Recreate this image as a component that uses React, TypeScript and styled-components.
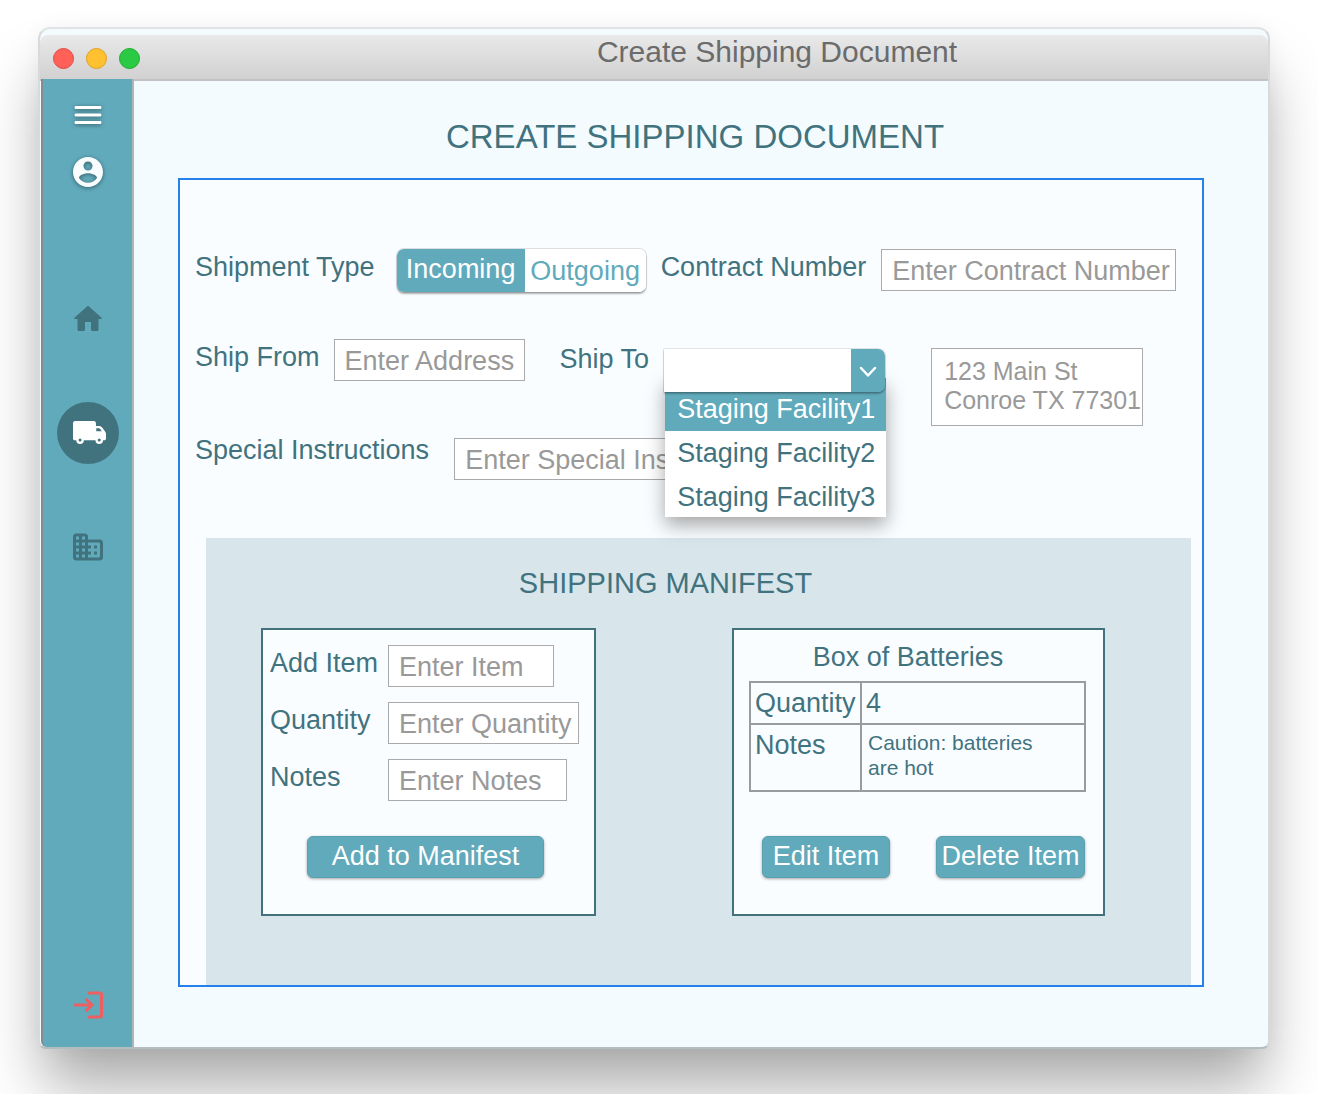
import React, { useState } from "react";
import styled, { createGlobalStyle, css } from "styled-components";

const teal = "#61aabb";
const deepTeal = "#41737f";
const hint = "#999999";
const line = "#aaaaaa";

const GlobalStyle = createGlobalStyle`
  *, *::before, *::after { box-sizing: border-box; }
  body {
    margin: 0;
    background: #ffffff;
    color: ${deepTeal};
    font-family: "Liberation Sans", Helvetica, Arial, sans-serif;
    font-size: 27px;
    line-height: 32px;
  }
  button, input, select, textarea { font: inherit; color: inherit; margin: 0; }
  h1, h2, h3, ul { margin: 0; padding: 0; font-weight: 400; }
`;

const Desktop = styled.div`
  display: flex;
  min-height: 100vh;
  padding: 27px 48px 45px 38px;
  overflow: hidden;
`;

const AppWindow = styled.div`
  flex: 1;
  display: flex;
  flex-direction: column;
  padding-top: 6px;
  border: 2px solid #d6dadb;
  border-top-color: #dfe3e4;
  border-bottom-color: #b4bcbf;
  border-radius: 12px 12px 8px 8px;
  background: #f3fbfe;
  box-shadow: 0 42px 60px -6px rgba(0, 0, 0, 0.34), 0 0 20px rgba(0, 0, 0, 0.04);
`;

const TitleBar = styled.header`
  display: flex;
  align-items: flex-start;
  height: 46px;
  padding-left: 13px;
  border-bottom: 2px solid #c2c2c4;
  border-radius: 8px 8px 0 0;
  background: linear-gradient(#e9e9e9, #d1d1d1);
`;

const Lights = styled.div`
  display: flex;
  gap: 12px;
  padding-top: 13px;
`;

const Light = styled.button<{ $fill: string; $edge: string }>`
  width: 21px;
  height: 21px;
  padding: 0;
  border: 1px solid ${(p) => p.$edge};
  border-radius: 50%;
  background: ${(p) => p.$fill};
`;

const WindowTitle = styled.div`
  flex: 1;
  padding-left: 146px;
  color: #6b6b6b;
  font-size: 30px;
  line-height: 34px;
  text-align: center;
`;

const Body = styled.div`
  flex: 1;
  display: flex;
`;

const Sidebar = styled.nav`
  flex: none;
  display: flex;
  flex-direction: column;
  align-items: center;
  width: 93px;
  margin: -2px 0 0 1px;
  padding: 18px 0 24px;
  border-left: 2px solid #858b8e;
  border-right: 2px solid #b0b5b8;
  border-bottom-left-radius: 6px;
  background: ${teal};
`;

const SideGroup = styled.div<{ $gap: number }>`
  display: flex;
  flex-direction: column;
  align-items: center;
  gap: ${(p) => p.$gap}px;
`;

const Pages = styled(SideGroup)`
  margin: 98px 0 auto;
`;

const IconButton = styled.button<{ $tone: string; $shadow?: boolean }>`
  display: flex;
  padding: 0;
  border: 0;
  background: none;
  color: ${(p) => p.$tone};
  svg { ${(p) => p.$shadow && css`filter: drop-shadow(0 1px 2px rgba(0, 0, 0, 0.45));`} }
`;

const PageButton = styled.button<{ $active?: boolean }>`
  display: flex;
  align-items: center;
  justify-content: center;
  width: 62px;
  height: 62px;
  padding: 0;
  border: 0;
  border-radius: 50%;
  background: ${(p) => (p.$active ? deepTeal : "transparent")};
  color: ${(p) => (p.$active ? "#ffffff" : deepTeal)};
`;

const Main = styled.main`
  flex: 1;
  min-width: 0;
  padding: 36px 64px 59px 44px;
`;

const PageTitle = styled.h1`
  margin-bottom: 21px;
  padding-left: 8px;
  font-size: 33px;
  line-height: 40px;
  text-align: center;
`;

const Panel = styled.form`
  padding-top: 69px;
  border: 2px solid #2680eb;
  background: #fafdff;
`;

const Row = styled.div<{ $space: number }>`
  display: flex;
  align-items: flex-start;
  padding-left: 15px;
  margin-bottom: ${(p) => p.$space}px;
`;

const Field = styled.div<{ $gap?: number; $before?: number; $drop?: number }>`
  display: flex;
  align-items: flex-start;
  gap: ${(p) => p.$gap ?? 14}px;
  margin-left: ${(p) => p.$before ?? 0}px;
  padding-top: ${(p) => p.$drop ?? 0}px;
`;

const labelText = css`
  padding-top: 2px;
  white-space: nowrap;
`;

const Label = styled.label<{ $width?: number }>`
  ${labelText}
  width: ${(p) => (p.$width ? `${p.$width}px` : "auto")};
`;

const GroupLabel = styled.span`
  ${labelText}
`;

const TextInput = styled.input<{ $width: number }>`
  width: ${(p) => p.$width}px;
  height: 42px;
  padding: 2px 0 0 10px;
  border: 1px solid ${line};
  border-radius: 0;
  background: #ffffff;
  outline: none;
  &::placeholder { color: ${hint}; opacity: 1; }
`;

const Toggle = styled.div`
  display: flex;
  width: 249px;
  height: 43px;
  overflow: hidden;
  border-radius: 7px;
  box-shadow: 0 0 0 1px rgba(0, 0, 0, 0.12), 0 2px 2px rgba(0, 0, 0, 0.3);
`;

const ToggleOption = styled.button<{ $on: boolean }>`
  flex: ${(p) => (p.$on ? "0 0 128px" : "1")};
  padding: 0 0 ${(p) => (p.$on ? 4 : 0)}px;
  border: 0;
  background: ${(p) => (p.$on ? teal : "#ffffff")};
  color: ${(p) => (p.$on ? "#ffffff" : teal)};
`;

const Combo = styled.div`
  position: relative;
  width: 221px;
`;

const ComboFace = styled.div`
  position: relative;
  z-index: 3;
  display: flex;
  height: 43px;
  overflow: hidden;
  border-radius: 1px 7px 7px 1px;
  box-shadow: 0 0 0 1px rgba(0, 0, 0, 0.1), 0 2px 2px rgba(0, 0, 0, 0.25);
`;

const ComboSelect = styled.select`
  flex: 1;
  min-width: 0;
  padding: 0 8px;
  border: 0;
  border-radius: 0;
  background: #ffffff;
  appearance: none;
  outline: none;
`;

const ComboArrow = styled.button`
  display: flex;
  align-items: center;
  justify-content: center;
  width: 34px;
  padding: 2px 0 0;
  border: 0;
  background: ${teal};
  color: #ffffff;
`;

const Menu = styled.ul`
  position: absolute;
  z-index: 2;
  top: 29px;
  left: 1px;
  width: 221px;
  padding-bottom: 2px;
  list-style: none;
  background: #ffffff;
  box-shadow: 0 8px 18px rgba(0, 0, 0, 0.35);
`;

const MenuItem = styled.li<{ $on: boolean; $first: boolean }>`
  height: ${(p) => (p.$first ? 53 : 42)}px;
  padding: ${(p) => (p.$first ? 15 : 6)}px 0 0 12px;
  background: ${(p) => (p.$on ? teal : "#ffffff")};
  color: ${(p) => (p.$on ? "#ffffff" : deepTeal)};
  white-space: nowrap;
  & + & + & { padding-top: 8px; }
`;

const Address = styled.textarea`
  display: block;
  width: 212px;
  height: 78px;
  margin: 9px 0 0 46px;
  padding: 8px 0 0 12px;
  border: 1px solid ${line};
  border-radius: 0;
  background: #ffffff;
  color: ${hint};
  font-size: 25px;
  line-height: 29px;
  white-space: pre;
  overflow: hidden;
  resize: none;
  outline: none;
`;

const Manifest = styled.section`
  margin: 0 11px 0 26px;
  padding: 26px 86px 69px 55px;
  background: #d8e6eb;
`;

const ManifestTitle = styled.h2`
  margin: 0 0 26px;
  padding-right: 35px;
  font-size: 29px;
  line-height: 38px;
  text-align: center;
`;

const Cards = styled.div`
  display: flex;
  justify-content: space-between;
`;

const Card = styled.div<{ $width: number }>`
  display: flex;
  flex-direction: column;
  width: ${(p) => p.$width}px;
  padding: 15px 15px 36px 7px;
  border: 2px solid ${deepTeal};
  background: #fafdff;
`;

const ItemFields = styled.div`
  display: flex;
  flex-direction: column;
  gap: 15px;
  margin-bottom: 35px;
`;

const ItemCard = styled(Card)`
  padding: 11px 17px 36px 15px;
`;

const ItemName = styled.h3`
  margin-bottom: 8px;
  padding-right: 19px;
  font-size: 27px;
  line-height: 32px;
  text-align: center;
`;

const ItemTable = styled.table`
  width: 100%;
  margin-bottom: 44px;
  border-collapse: collapse;
  table-layout: fixed;
  th, td {
    border: 2px solid #999c9f;
    padding: 4px;
    font-weight: 400;
    text-align: left;
    vertical-align: top;
  }
  th { width: 111px; white-space: nowrap; }
`;

const SmallCell = styled.td`
  && { padding: 5px 50px 10px 6px; }
  font-size: 21px;
  line-height: 25px;
`;

const Actions = styled.div`
  display: flex;
  justify-content: space-between;
  padding: 0 1px 0 13px;
`;

const ActionButton = styled.button<{ $width: number }>`
  width: ${(p) => p.$width}px;
  height: 42px;
  padding: 0 0 2px;
  border: 1px solid #5aa0b0;
  border-radius: 6px;
  background: ${teal};
  color: #ffffff;
  white-space: nowrap;
  box-shadow: 0 1px 3px rgba(0, 0, 0, 0.35);
`;

const AddButton = styled(ActionButton)`
  margin-left: 37px;
`;

function Icon({ d }: { d: string }) {
  return (
    <svg width="36" height="36" viewBox="0 0 24 24" fill="currentColor" fillRule="evenodd" aria-hidden="true">
      <path d={d} />
    </svg>
  );
}

const glyphs = {
  menu: "M4 18h16c.55 0 1-.45 1-1s-.45-1-1-1H4c-.55 0-1 .45-1 1s.45 1 1 1zm0-5h16c.55 0 1-.45 1-1s-.45-1-1-1H4c-.55 0-1 .45-1 1s.45 1 1 1zM3 7c0 .55.45 1 1 1h16c.55 0 1-.45 1-1s-.45-1-1-1H4c-.55 0-1 .45-1 1z",
  account:
    "M12 2C6.48 2 2 6.48 2 12s4.480 10 10 10 10-4.480 10-10S17.520 2 12 2zm0 3c1.660 0 3 1.340 3 3s-1.340 3-3 3-3-1.340-3-3 1.340-3 3-3zm0 14.200c-2.500 0-4.710-1.280-6-3.220.03-1.990 4-3.080 6-3.080 1.990 0 5.970 1.090 6 3.080-1.290 1.940-3.500 3.220-6 3.220z",
  home: "M10 19v-5h4v5c0 .55.45 1 1 1h3c.55 0 1-.45 1-1v-7h1.7c.46 0 .68-.57.33-.87L12.67 3.6c-.38-.34-.96-.34-1.34 0l-8.36 7.53c-.34.3-.13.87.33.87H5v7c0 .55.45 1 1 1h3c.55 0 1-.45 1-1z",
  truck:
    "M3.5 4H15.800a1.500 1.500 0 0 1 1.500 1.500V7.300h2.100c.8 0 1.500.4 2 1l2 2.700c.4.5.6 1.100.6 1.700v3c0 .7-.5 1.200-1.200 1.200H22a2.500 2.500 0 0 1-5 0H9.200a2.500 2.500 0 0 1-5 0H3.200C2.500 16.900 2 16.400 2 15.700V5.500A1.500 1.500 0 0 1 3.500 4zM17.500 8.900v1.900h3.700L20.200 9.400c-.3-.3-.6-.5-1-.5zM6.700 15.700a1 1 0 1 0 0 2 1 1 0 0 0 0-2zM19.500 15.700a1 1 0 1 0 0 2 1 1 0 0 0 0-2z",
  building:
    "M12 7V5c0-1.1-.9-2-2-2H4c-1.1 0-2 .9-2 2v14c0 1.1.9 2 2 2h16c1.1 0 2-.9 2-2V9c0-1.1-.9-2-2-2h-8zM6 19H4v-2h2v2zm0-4H4v-2h2v2zm0-4H4V9h2v2zm0-4H4V5h2v2zm4 12H8v-2h2v2zm0-4H8v-2h2v2zm0-4H8V9h2v2zm0-4H8V5h2v2zm9 12h-7v-2h2v-2h-2v-2h2v-2h-2V9h7c.55 0 1 .45 1 1v8c0 .55-.45 1-1 1zm-1-8h-2v2h2v-2zm0 4h-2v2h2v-2z",
};

function ExitIcon() {
  return (
    <svg
      width="36"
      height="36"
      viewBox="0 0 36 36"
      fill="none"
      stroke="currentColor"
      strokeWidth="3"
      strokeLinecap="round"
      strokeLinejoin="round"
      aria-hidden="true"
    >
      <path d="M19 6h11a1.5 1.5 0 0 1 1.5 1.5v21a1.5 1.5 0 0 1-1.5 1.5H19" />
      <path d="M5 18h17M16.5 12.500l5.500 5.500-5.500 5.500" />
    </svg>
  );
}

const facilities = ["Staging Facility1", "Staging Facility2", "Staging Facility3"];

export default function App() {
  const [direction, setDirection] = useState("Incoming");
  const [facility, setFacility] = useState("");
  const [highlighted, setHighlighted] = useState(0);
  const [open, setOpen] = useState(true);

  return (
    <>
      <GlobalStyle />
      <Desktop>
        <AppWindow>
          <TitleBar>
            <Lights>
              <Light type="button" aria-label="Close" $fill="#ff6158" $edge="#e14942" />
              <Light type="button" aria-label="Minimize" $fill="#ffc130" $edge="#dfa023" />
              <Light type="button" aria-label="Zoom" $fill="#2aca44" $edge="#1dad2b" />
            </Lights>
            <WindowTitle>Create Shipping Document</WindowTitle>
          </TitleBar>
          <Body>
            <Sidebar aria-label="Main">
              <SideGroup $gap={21}>
                <IconButton type="button" aria-label="Menu" $tone="#ffffff" $shadow>
                  <Icon d={glyphs.menu} />
                </IconButton>
                <IconButton type="button" aria-label="Account" $tone="#f8fcfd" $shadow>
                  <Icon d={glyphs.account} />
                </IconButton>
              </SideGroup>
              <Pages $gap={52}>
                <PageButton type="button" aria-label="Home">
                  <Icon d={glyphs.home} />
                </PageButton>
                <PageButton type="button" aria-label="Shipping" $active>
                  <Icon d={glyphs.truck} />
                </PageButton>
                <PageButton type="button" aria-label="Facilities">
                  <Icon d={glyphs.building} />
                </PageButton>
              </Pages>
              <IconButton type="button" aria-label="Log out" $tone="#ec5f63">
                <ExitIcon />
              </IconButton>
            </Sidebar>
            <Main>
              <PageTitle>CREATE SHIPPING DOCUMENT</PageTitle>
              <Panel onSubmit={(e) => e.preventDefault()}>
                <Row $space={47}>
                  <Field $gap={22}>
                    <GroupLabel id="type-label">Shipment Type</GroupLabel>
                    <Toggle role="group" aria-labelledby="type-label">
                      {["Incoming", "Outgoing"].map((name) => (
                        <ToggleOption
                          key={name}
                          type="button"
                          aria-pressed={direction === name}
                          $on={direction === name}
                          onClick={() => setDirection(name)}
                        >
                          {name}
                        </ToggleOption>
                      ))}
                    </Toggle>
                  </Field>
                  <Field $before={15} $gap={15}>
                    <Label htmlFor="contract">Contract Number</Label>
                    <TextInput id="contract" placeholder="Enter Contract Number" $width={295} />
                  </Field>
                </Row>
                <Row $space={6}>
                  <Field>
                    <Label htmlFor="from">Ship From</Label>
                    <TextInput id="from" placeholder="Enter Address" $width={191} />
                  </Field>
                  <Field $before={35} $gap={15}>
                    <Field $drop={2}>
                      <Label htmlFor="to">Ship To</Label>
                    </Field>
                    <Field $drop={10}>
                      <Combo>
                        <ComboFace>
                          <ComboSelect
                            id="to"
                            value={facility}
                            onChange={(e) => setFacility(e.target.value)}
                          >
                            <option value="" />
                            {facilities.map((name) => (
                              <option key={name}>{name}</option>
                            ))}
                          </ComboSelect>
                          <ComboArrow
                            type="button"
                            aria-label="Show facilities"
                            aria-expanded={open}
                            onClick={() => setOpen(!open)}
                          >
                            <svg width="18" height="12" viewBox="0 0 18 12" fill="none" aria-hidden="true">
                              <path
                                d="M2 2l7 7.500L16 2"
                                stroke="currentColor"
                                strokeWidth="2.5"
                                strokeLinecap="round"
                                strokeLinejoin="round"
                              />
                            </svg>
                          </ComboArrow>
                        </ComboFace>
                        {open && (
                          <Menu role="listbox" aria-label="Facilities">
                            {facilities.map((name, i) => (
                              <MenuItem
                                key={name}
                                role="option"
                                aria-selected={i === highlighted}
                                $on={i === highlighted}
                                $first={i === 0}
                                onMouseEnter={() => setHighlighted(i)}
                                onClick={() => {
                                  setFacility(name);
                                  setOpen(false);
                                }}
                              >
                                {name}
                              </MenuItem>
                            ))}
                          </Menu>
                        )}
                      </Combo>
                    </Field>
                  </Field>
                  <Address aria-label="Facility address" readOnly value={"123 Main St\nConroe TX 77301"} />
                </Row>
                <Row $space={58}>
                  <Field>
                    <Label htmlFor="special">Special Instructions</Label>
                  </Field>
                  <Field $before={25} $drop={6}>
                    <TextInput id="special" placeholder="Enter Special Instructions" $width={330} />
                  </Field>
                </Row>
                <Manifest>
                  <ManifestTitle>SHIPPING MANIFEST</ManifestTitle>
                  <Cards>
                    <Card $width={335}>
                      <ItemFields>
                        <Field>
                          <Label htmlFor="item" $width={104}>Add Item</Label>
                          <TextInput id="item" placeholder="Enter Item" $width={166} />
                        </Field>
                        <Field>
                          <Label htmlFor="quantity" $width={104}>Quantity</Label>
                          <TextInput id="quantity" placeholder="Enter Quantity" $width={191} />
                        </Field>
                        <Field>
                          <Label htmlFor="notes" $width={104}>Notes</Label>
                          <TextInput id="notes" placeholder="Enter Notes" $width={179} />
                        </Field>
                      </ItemFields>
                      <AddButton type="submit" $width={237}>Add to Manifest</AddButton>
                    </Card>
                    <ItemCard $width={373}>
                      <ItemName>Box of Batteries</ItemName>
                      <ItemTable>
                        <tbody>
                          <tr>
                            <th scope="row">Quantity</th>
                            <td>4</td>
                          </tr>
                          <tr>
                            <th scope="row">Notes</th>
                            <SmallCell>Caution: batteries are hot</SmallCell>
                          </tr>
                        </tbody>
                      </ItemTable>
                      <Actions>
                        <ActionButton type="button" $width={128}>Edit Item</ActionButton>
                        <ActionButton type="button" $width={149}>Delete Item</ActionButton>
                      </Actions>
                    </ItemCard>
                  </Cards>
                </Manifest>
              </Panel>
            </Main>
          </Body>
        </AppWindow>
      </Desktop>
    </>
  );
}
